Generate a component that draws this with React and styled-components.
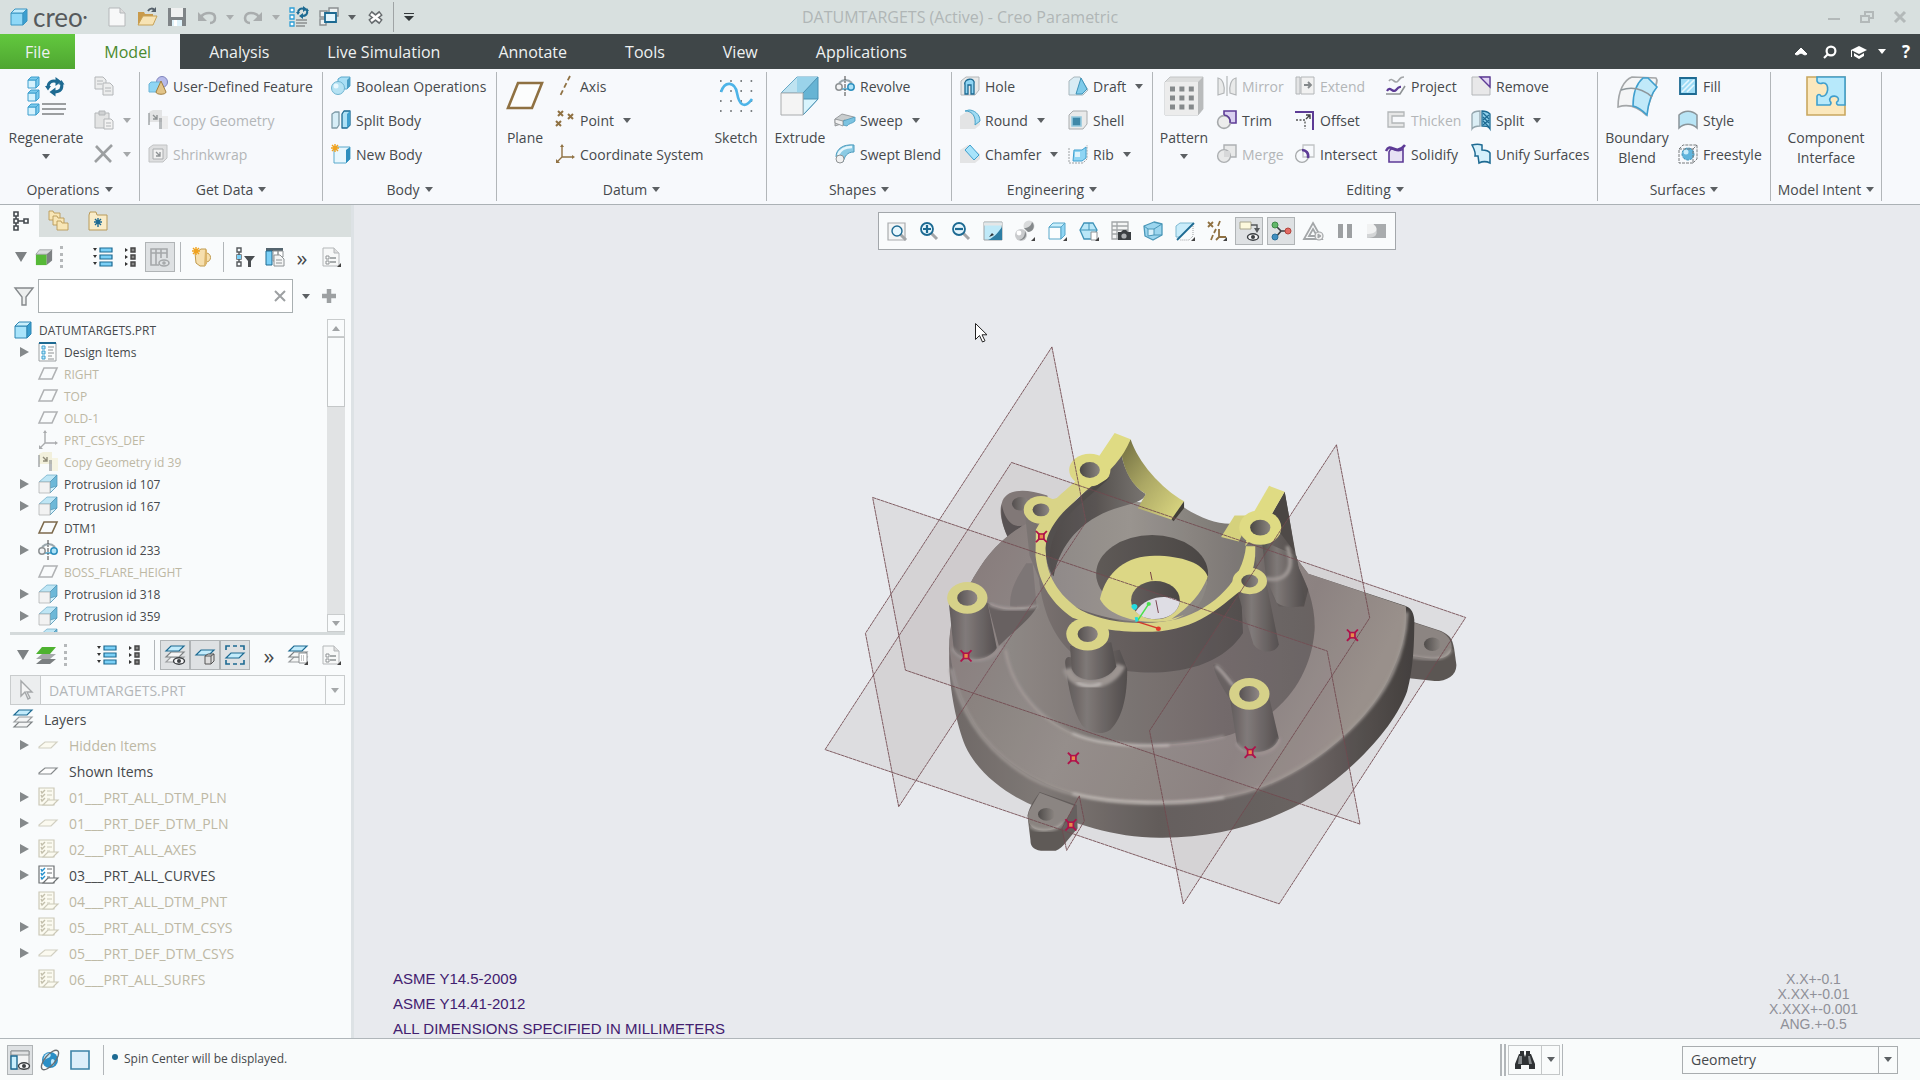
import React from "react";
import styled, { createGlobalStyle, css } from "styled-components";

const ink = "#46494c";
const faded = "#b3b6b8";
const teal = "#1d6a92";
const blue = "#3f9fce";
const steel = "#8e9294";
const purple = "#5d3b96";
const tan = "#8f7142";

/* ---------- icons, 20x20 unless a box is given ---------- */

const cube = (front, top, side, line) => (
  <g stroke={line} strokeLinejoin="round">
    <path fill={front} d="M2 6h12v12H2z" />
    <path fill={top} d="M2 6l4-4h12l-4 4z" />
    <path fill={side} d="M14 6l4-4v12l-4 4z" />
  </g>
);

const sheet = (y, fill, line) => (
  <path d={`M1 ${y + 5}l5-5h13l-5 5z`} fill={fill} stroke={line} strokeWidth="1.2" />
);

const swirl = (color) => (
  <g fill="none" stroke={color} strokeWidth="2">
    <path d="M2 7c0-4 3-5 6-4" />
    <path d="M11 4c1 4-1 6-5 6" />
    <path d="M7 0l4 3-4 3zM7 7v6l-4-3z" fill={color} stroke="none" />
    <path d="M0 6h4L2 9zM9 5h4l-2-3z" fill={color} stroke="none" />
  </g>
);

const pin = <path d="M20 16v4h-4z" fill="#444" />;
const magnifier = (
  <g>
    <path d="M12 12l6 6" stroke="#a3a6a8" strokeWidth="3" />
    <circle cx="8" cy="8" r="6" fill="#e6f6fd" stroke={teal} strokeWidth="1.8" />
  </g>
);
const checklist = (line, tick, page) => (
  <g fill={page} stroke={line} strokeWidth="1.2">
    <path d="M1 1h15v17H1z" />
    <path d="M9 4h5M9 8h5M9 12h3" />
    <path d="M3 4l1 2 3-3M3 8l1 2 3-3M3 12l1 2 3-3" fill="none" stroke={tick} strokeWidth="1.4" />
    <path d="M5 18l5-5h10l-5 5z" />
  </g>
);
const listRows = (
  <g>
    {[1, 8, 15].map((y) => (
      <g key={y}>
        <path d={`M0 ${y}h4l-2 3z`} fill="#333" />
        <path d={`M7 ${y}h12v4H7z`} fill="#7bd0f7" stroke={teal} strokeWidth="1.2" />
      </g>
    ))}
  </g>
);
const listShort = (
  <g>
    {[1, 8, 15].map((y) => (
      <g key={y}>
        <path d={`M4 ${y}v4l3-2z`} fill="#333" />
        <path d={`M10 ${y}h4v4h-4z`} fill="#888" stroke="#444" strokeWidth="1.4" />
      </g>
    ))}
  </g>
);
const eye = (
  <g>
    <ellipse cx="14" cy="16" rx="5.5" ry="3.2" fill="#f4f5f6" stroke="#3b3f42" strokeWidth="1.4" />
    <circle cx="14" cy="16" r="2" fill="#3b3f42" />
  </g>
);
const extrude = (
  <g strokeLinejoin="round" strokeWidth=".7">
    <path d="M1 8L9 1h10L12 8z" fill="#bfe6f5" stroke="#6aa9c6" />
    <path d="M12 8l7-7v11l-7 7z" fill="#6db8d8" stroke="#4c93b4" />
    <path d="M12 19v-5l7-2z" fill="#d8f2fb" stroke="#4c93b4" />
    <path d="M1 8h11v11H1z" fill="#f2f2f2" stroke="#a9acae" />
  </g>
);
const revolve = (
  <g fill="none" strokeWidth="1.5">
    <path d="M4 7c4-4 9-4 13 0" stroke="#9aa7ad" strokeWidth="2" />
    <path d="M5 13h10" stroke="#72b9d8" strokeWidth="2" />
    <circle cx="4" cy="11" r="3.2" fill="#f3f4f5" stroke="#8e9294" />
    <circle cx="16" cy="11" r="3.2" fill="#aee3f8" stroke="#2d8fbe" />
    <path d="M10 0v20" stroke="#444" strokeWidth="1" strokeDasharray="4 1 2 1" />
  </g>
);
const csys = (color) => (
  <g stroke={color} fill={color} strokeWidth="1.4">
    <path d="M7 2v11h11M7 13l-5 5" fill="none" />
    <path d="M5 3l2-3 2 3zM17 11l3 2-3 2zM1 15v4h4z" stroke="none" />
  </g>
);
const copyGeom = (a, b, arrow) => (
  <g>
    <path d="M1 2l4-2h9v12H1z" fill={a} />
    <path d="M0 3h2v12H0zM11 8h3v11h-3z" fill={steel} opacity=".6" />
    <path d="M14 6h6v13h-6z" fill={b} />
    <path d="M5 5l4 4M9 5v4H5" fill="none" stroke={arrow} strokeWidth="1.4" />
  </g>
);
const page = (
  <g>
    <path d="M2 1h11l5 5v13H2z" fill="#f7f8f8" stroke="#b4b7b9" />
    <path d="M13 1v5h5" fill="#ddd" stroke="#b4b7b9" />
  </g>
);
const propsPage = (
  <g>
    {page}
    <path d="M9 11h6M9 15h6" stroke={steel} strokeWidth="1.3" />
    <path d="M5 9h3v3H5zM5 14h3v3H5z" fill="#fff" stroke={steel} />
    {pin}
  </g>
);
const slab = (color, fill = "none") => (
  <path d="M1 15L6 4h13l-5 11z" fill={fill} stroke={color} strokeWidth="1.6" />
);
const flat = (color, fill) => (
  <path d="M1 12l6-5h12l-6 6H1z" fill={fill} stroke={color} strokeWidth="1.2" />
);
const folder = (x, y) => (
  <path key={x} d={`M${x} ${y}h4l1 2h6v7H${x}z`} fill="#f8e6b6" stroke="#b99a58" strokeWidth=".9" />
);

const icons = {
  logo: cube("#8fd8f7", "#c2ebfb", "#3a9fd0", "#3a95c2"),
  partBlue: cube("#a9e4fb", "#c9effc", "#3a9fd0", "#2f86b3"),
  newFile: page,
  open: (
    <g>
      <path d="M1 5h6l1 2h8v11H1z" fill="#c99a4a" />
      <path d="M1 18L6 9h14l-4 9z" fill="#f7e3b4" stroke="#c7a257" />
      <path d="M11 4c2-3 5-3 6-1" fill="none" stroke="#55606a" strokeWidth="2" />
      <path d="M19 0v5h-5z" fill="#55606a" />
    </g>
  ),
  save: (
    <g>
      <path d="M1 1h18v18H1z" fill="#7f8487" />
      <path d="M4 1h12v9H4z" fill="#f0f1f1" />
      <path d="M5 13h10v6H5z" fill="#dff3fb" />
      <path d="M7 13h3v6H7z" fill="#fff" />
    </g>
  ),
  undo: (
    <g fill="none" stroke="#a9adae" strokeWidth="2.6">
      <path d="M4 10c3-5 14-6 14 1 0 3-2 5-5 5" />
      <path d="M1 5v9h9z" fill="#a9adae" stroke="none" />
    </g>
  ),
  redo: (
    <g fill="none" stroke="#a9adae" strokeWidth="2.6">
      <path d="M16 10c-3-5-14-6-14 1 0 3 2 5 5 5" />
      <path d="M19 5v9h-9z" fill="#a9adae" stroke="none" />
    </g>
  ),
  regenSmall: (
    <g>
      {[1, 8, 15].map((y) => (
        <path key={y} d={`M1 ${y}h4v4H1z`} fill="#fff" stroke="#2f9fd6" strokeWidth="1.3" />
      ))}
      <g transform="translate(7 -1)">{swirl(teal)}</g>
      <path d="M7 13h11M7 16h11M7 19h9" stroke="#8a8e90" strokeWidth="1.4" />
    </g>
  ),
  windows: (
    <g fill="#eef2f2" stroke="#8a8f91" strokeWidth="1.4">
      <path d="M1 4h7v6H1zM10 1h9v8h-9zM1 12h6v6H1z" />
      <path d="M6 6h11v9H6z" fill="#e4f6fd" stroke={teal} strokeWidth="1.8" />
    </g>
  ),
  closeDoc: (
    <g>
      <path d="M5 6l11 9M16 6L5 15" stroke="#666b6e" strokeWidth="5.5" />
      <path d="M6 7l9 7M15 7l-9 7" stroke="#fff" strokeWidth="2.6" />
    </g>
  ),
  copy: (
    <g fill="#eceded" stroke="#b3b6b8">
      <path d="M1 1h8l3 3v9H1z" />
      <path d="M9 7h7l3 3v9H9z" />
      <path d="M3 5h6M3 8h5M11 12h6M11 15h6" />
    </g>
  ),
  paste: (
    <g fill="#e3e4e4" stroke="#b3b6b8">
      <path d="M1 3h14v15H1z" />
      <path d="M5 1h6v4H5z" fill="#cfd1d2" />
      <path d="M10 9h7l2 2v8h-9z" fill="#f2f2f2" />
      <path d="M12 13h5M12 16h5" />
    </g>
  ),
  del: <path d="M2 2l15 16M18 1L1 18" stroke="#9c9fa1" strokeWidth="2.6" />,
  udf: (
    <g>
      <circle cx="14" cy="6" r="5.5" fill="#b7bbea" stroke="#7f84bd" />
      <path d="M1 8l2-2h10v10H1z" fill="#8fd5f4" stroke="#6cb4d6" />
      <path d="M13 5l5 11c0 3-10 3-10 0z" fill="#e2c488" stroke="#a07d3e" />
    </g>
  ),
  copyGeom: copyGeom("#e3e4e5", "#ececec", steel),
  copyGeomTree: copyGeom("#f2f0dc", "#f6f4e2", "#8f8b78"),
  shrinkwrap: (
    <g>
      <path d="M1 4l4-3h14v13l-4 4H1z" fill="#dedfe0" stroke="#c1c3c4" />
      <path d="M5 5h10v10H5z" fill="#f1f1f1" stroke="#a9acae" />
      <path d="M8 8l4 4M12 8v4H8" fill="none" stroke={steel} strokeWidth="1.3" />
    </g>
  ),
  boolean: (
    <g>
      <path d="M7 3l3-2h9v9l-3 3H7z" fill="#a9dff5" stroke="#5aa9cc" />
      <path d="M16 4l3-3v9l-3 3z" fill="#4a9fc6" />
      <circle cx="7" cy="12" r="6.5" fill="#b5e2f3" stroke="#6fb4d0" />
      <circle cx="5" cy="10" r="2.5" fill="#e9f8fe" />
    </g>
  ),
  splitBody: (
    <g strokeWidth="1.3" strokeLinejoin="round">
      <path d="M1 4l3-2h4v13l-2 3H1z" fill="#d7eef7" stroke="#7d9aa6" />
      <path d="M11 4l2-3h6v14l-3 3h-5z" fill="#aee1f6" stroke={teal} />
      <path d="M16 4l3-3v14l-3 3z" fill={blue} />
    </g>
  ),
  newBody: (
    <g>
      <path d="M3 6l3-3h13v12l-4 4H3z" fill="#e8f7fd" stroke="#5aa9cc" />
      <path d="M15 6l4-3v12l-4 4z" fill="#2d8fbe" />
      <path d="M4 0v8M0 4h8M1 1l6 6M7 1L1 7" stroke="#f0a21e" strokeWidth="1.4" />
    </g>
  ),
  axis: <path d="M15 0L5 20" stroke={tan} strokeWidth="1.8" strokeDasharray="5 3" />,
  point: (
    <path d="M3 1l5 5M8 1L3 6M13 4l5 5M18 4l-5 5M1 11l5 5M6 11l-5 5" stroke={tan} strokeWidth="2" />
  ),
  csys: csys(tan),
  csysGray: csys("#a9abad"),
  revolve,
  extrude,
  sweep: (
    <g strokeLinejoin="round" strokeWidth=".8">
      <path d="M0 9l7-5 12 3-4 4-6-1v3l-9 3z" fill="#c9cdce" stroke="#888c8e" />
      <path d="M8 11l12-4v4c-3 3-6 2-8 5l-4-1z" fill="#7cc3e1" stroke="#4c9bbd" />
      <path d="M0 9l8 2v5l-8-3z" fill="#f1f1f1" stroke="#888c8e" />
    </g>
  ),
  sweptBlend: (
    <g>
      <path d="M1 13C1 5 8 0 19 1v7c-7 0-9 4-11 10z" fill="#8ccbe4" stroke="#4c9bbd" />
      <path d="M3 11C5 6 10 3 17 3" fill="none" stroke="#e5f6fc" strokeWidth="2.4" />
      <circle cx="5" cy="15" r="4" fill="#f1f1f1" stroke="#8e9294" />
    </g>
  ),
  hole: (
    <g>
      <path d="M1 5l5-4h13v13l-4 5H1z" fill="#e7e8e8" stroke="#b4b7b9" />
      <path d="M5 9c-2-7 11-8 9-1v10h-3V9H8v9H5z" fill="#8fd5f4" stroke={teal} strokeWidth="1.3" />
    </g>
  ),
  round: (
    <g>
      <path d="M0 6l8-5 12 5v9l-5 4H0z" fill="#e3e4e5" />
      <path d="M5 1c8 0 11 6 10 14l5-4C20 4 14 0 9 0z" fill="#a0dbf3" stroke="#4aa2c8" />
    </g>
  ),
  chamfer: (
    <g>
      <path d="M0 6l8-5 12 9v5l-5 4H0z" fill="#e3e4e5" />
      <path d="M5 6l5-5 9 10-5 5z" fill="#a8e4fb" stroke="#3f9fce" />
    </g>
  ),
  draft: (
    <g>
      <path d="M1 5l5-4h6l8 13-5 5H1z" fill="#d9ecf4" stroke="#a9b7bd" />
      <path d="M8 18l5-16 6 11-5 5z" fill="#7fcbea" stroke="#3f93b8" />
    </g>
  ),
  shell: (
    <g>
      <path d="M1 5l4-4h14v13l-4 5H1z" fill="#e9eaea" stroke="#a9acae" />
      <path d="M4 7h9v9H4z" fill="#3f88a8" stroke="#94c9de" strokeWidth="1.6" />
    </g>
  ),
  rib: (
    <g>
      <path d="M1 4v15h14l4-4V1" fill="none" stroke="#9da1a3" strokeDasharray="2 1" />
      <path d="M6 6l-1 11h9l4-3V3l-4 3z" fill="#8fd5f4" stroke="#3f9fce" />
      <path d="M7 8h5v5H7z" fill="#dff3fb" />
    </g>
  ),
  mirror: (
    <g fill="#e9eaea" stroke="#b3b6b8" strokeWidth="1.2">
      <path d="M1 2c5 1 7 8 6 15l-6 2zM19 2c-5 1-7 8-6 15l6 2z" />
      <path d="M10 0v20" />
    </g>
  ),
  trim: (
    <g strokeWidth="1.6">
      <path d="M7 1h12v12H7z" fill="#d9cff0" stroke={purple} />
      <circle cx="7" cy="12" r="6.4" fill="#ececec" stroke="#a6a9ab" />
      <path d="M7 5c4 0 7 4 6 8" fill="none" stroke={purple} />
    </g>
  ),
  merge: (
    <g fill="#e8e9e9" stroke="#adb0b2" strokeWidth="1.4">
      <path d="M7 1h12v12H7z" />
      <circle cx="7" cy="12" r="6.4" />
      <path d="M7 7h6v6H7z" fill="#d7d8d9" stroke="none" />
    </g>
  ),
  extend: (
    <g stroke="#b3b6b8" fill="#e3e4e5">
      <path d="M1 1h4v17H1z" />
      <path d="M6 1h13v17H6z" fill="#f1f1f1" />
      <path d="M9 9h7M13 6l3 3-3 3" fill="none" stroke="#85898b" strokeWidth="1.8" />
    </g>
  ),
  offset: (
    <g fill="none">
      <path d="M0 2h18v18" stroke={purple} strokeWidth="2" />
      <path d="M1 10h9v9" stroke="#555" strokeDasharray="2 1.5" strokeWidth="1.3" />
      <path d="M11 9l4-4M11 5h4v4" stroke="#444" strokeWidth="1.4" />
    </g>
  ),
  intersect: (
    <g fill="none" strokeWidth="1.3">
      <path d="M8 1h11v12H8z" stroke="#c1c3c5" />
      <circle cx="7" cy="12" r="6.4" stroke="#a6a9ab" />
      <path d="M7 6c4 0 7 3 6 8" stroke={purple} strokeWidth="2.6" />
    </g>
  ),
  project: (
    <g fill="none" strokeWidth="1.6">
      <path d="M3 5c3-5 6 4 9 0s4-4 6-4" stroke="#a3a6a8" />
      <path d="M1 15c3-6 6 3 9-1s4-3 5-3" stroke={purple} strokeWidth="2.2" />
      <path d="M0 18h14l5-8" stroke="#8e9294" />
    </g>
  ),
  thicken: (
    <path d="M18 2H2v15h16v-4H6V6h12z" fill="#e6e7e7" stroke="#b3b6b8" strokeWidth="1.3" />
  ),
  solidify: (
    <g>
      <path d="M3 8c3-8 7 3 14-3v13H3z" fill="#e7e1f4" stroke={purple} strokeWidth="1.6" />
      <path d="M0 7c5-10 9 6 19-6" fill="none" stroke={purple} strokeWidth="2.6" />
    </g>
  ),
  remove: (
    <g>
      <path d="M1 1h18v18H1z" fill="#e8e8e9" stroke="#b4b7b9" />
      <path d="M9 1h10v10z" fill="#e0d3f3" stroke={purple} strokeWidth="1.4" />
    </g>
  ),
  split: (
    <g strokeWidth="1.3">
      <path d="M1 4c2-3 5-3 8-3v15c-3 0-6 0-8 3z" fill="#dbeef5" stroke="#93a5ad" />
      <path d="M11 1c4 0 6 1 8 3v15c-2-3-4-3-8-3z" fill="#8fd0ec" stroke={teal} />
      <path d="M12 3l6 6M12 7l6 6M12 11l6 6M18 5l-6 5M18 10l-6 5" stroke={teal} />
    </g>
  ),
  unify: (
    <path
      d="M1 1c4-1 7-1 10 0v5c3 0 6 0 8 3v10c-4-2-7-2-11 0l-1-7H4c1-4-1-7-3-11z"
      fill="#d5f0fb"
      stroke={teal}
      strokeWidth="1.5"
    />
  ),
  fill: (
    <g>
      <path d="M2 2h16v16H2z" fill="#9edcf6" stroke={teal} strokeWidth="1.8" />
      <path d="M4 11l7-7M4 16L16 4M9 16l7-7" stroke="#e6f7fe" strokeWidth="1.6" />
    </g>
  ),
  style: (
    <path d="M1 18V5c5-5 13-5 18 0v13c-5-5-13-5-18 0z" fill="#b9e5f6" stroke="#8a9499" strokeWidth="1.5" />
  ),
  freestyle: (
    <g fill="none" stroke="#777b7d" strokeDasharray="3 1">
      <circle cx="10" cy="10" r="6" fill="#5fb4dc" stroke="#3f93b8" />
      <circle cx="8" cy="8" r="2.5" fill="#c9ecfa" stroke="none" />
      <path d="M1 5h14v14H1zM1 5l4-4h14v14l-4 4M15 5l4-4" />
    </g>
  ),
  treeTab: (
    <g fill="none" stroke="#444a4e" strokeWidth="1.6">
      <path d="M4 1h4v4H4zM4 8h4v4H4zM4 15h4v4H4zM14 8h4v4h-4zM6 5v3M6 12v3M8 10h6" />
    </g>
  ),
  folders: <g>{[[0, 0], [4, 5], [8, 10]].map(([x, y]) => folder(x, y))}</g>,
  favorites: (
    <g>
      <path d="M1 4l1-3h6l1 3h10v15H1z" fill="#f9ecc8" stroke="#b99a58" />
      <path d="M10 7v9M6 11h8M7 8l6 6M13 8l-6 6" stroke={teal} strokeWidth="1.4" />
    </g>
  ),
  greenCube: (
    <g>
      <path d="M1 7h12v12H1z" fill="#56b937" />
      <path d="M1 7l4-5h14l-5 5z" fill="#d9dcdd" stroke="#8e9294" strokeWidth=".8" />
      <path d="M13 7l6-5v12l-6 5z" fill="#7d8183" />
    </g>
  ),
  greenLayers: (
    <g>
      <path d="M0 19l6-5h14l-6 5z" fill="#7b7f81" />
      <path d="M0 14l6-5h14l-6 5z" fill="#a6a9ab" />
      <path d="M0 9l6-7h14l-6 7z" fill="#4eb230" />
    </g>
  ),
  listRows,
  listShort,
  columns: (
    <g fill="none" stroke="#a5a8aa" strokeWidth="1.6">
      <path d="M1 2h16v4H1zM1 6v12h8M6 2v16M11 2v9M17 6v5" />
      <ellipse cx="14" cy="16" rx="5" ry="3" />
      <circle cx="14" cy="16" r="1" />
    </g>
  ),
  newPart: (
    <g>
      <path d="M3 6l6-4h5v4c6 0 6 9 0 9l-1 4H8l-4-3z" fill="#f6dfae" stroke="#c09a4d" />
      <path d="M13 3l2 0v14l-3 2z" fill="#dbb56c" />
      <path d="M4 0v8M0 4h8M1 1l6 6M7 1L1 7" stroke="#f0a21e" strokeWidth="1.4" />
    </g>
  ),
  treeFilter: (
    <g>
      <path d="M2 1h4v4H2zM2 8h4v4H2zM2 15h4v4H2zM4 5v3M4 12v3" fill="none" stroke="#55595c" strokeWidth="1.4" />
      <path d="M2 8h4v4H2z" fill="#7bd0f7" />
      <path d="M9 9h11l-4 5v6h-3v-6z" fill="#4a4e51" />
    </g>
  ),
  treeColumns: (
    <g>
      <path d="M1 1h17v3H1z" fill="#54646e" />
      <path d="M1 4h6v14H1z" fill="#7bd0f7" stroke={teal} />
      <path d="M8 4h5v10H8zM13 4h5v6h-5z" fill="#fff" stroke={steel} />
      <path d="M9 8h6l4 4v7H9z" fill="#f4f5f5" stroke={steel} />
      <path d="M11 13h6M11 16h6" stroke={steel} />
    </g>
  ),
  propsPage,
  funnel: <path d="M1 2h18l-7 9v8H8v-8z" fill="#eceeee" stroke="#85898c" strokeWidth="1.4" />,
  plus: <path d="M10 3v14M3 10h14" stroke="#9da0a2" strokeWidth="4.5" />,
  designItems: (
    <g>
      <path d="M1 1h17v18H1z" fill="#fbfcfc" stroke="#9da1a3" />
      <path d="M1 1h17" stroke={teal} strokeWidth="2" />
      <path d="M4 4h3v3H4zM4 9h3v3H4zM4 14h3v3H4z" fill="#bce8fa" stroke="#3f9fce" />
      <path d="M10 5h6M10 8h5M10 11h6M10 14h4M10 17h6" stroke={steel} />
    </g>
  ),
  slabGray: slab("#b0b2b4"),
  slabTan: slab("#7d6a4c"),
  layerSheets: (
    <g>
      {sheet(13, "#f4f5f5", "#7d8183")}
      {sheet(8, "#f4f5f5", "#9a9d9f")}
      {sheet(1, "#c2ebfb", teal)}
    </g>
  ),
  layersEye: (
    <g>
      {sheet(12, "#f4f5f5", "#9a9d9f")}
      {sheet(7, "#f4f5f5", "#7d8183")}
      {sheet(1, "#c2ebfb", teal)}
      {eye}
    </g>
  ),
  layerCube: (
    <g>
      {sheet(5, "#c2ebfb", teal)}
      <path d="M10 11l3-2h6v7l-3 3h-6zM10 11h6v8M16 11l3-2" fill="#ddd" stroke="#555" />
    </g>
  ),
  layerDash: (
    <g>
      <path d="M1 5V1h4M15 1h4v4M19 15v4h-4M5 19H1v-4M8 1h4M8 19h4" fill="none" stroke={teal} strokeWidth="1.6" />
      {sheet(8, "#c2ebfb", teal)}
    </g>
  ),
  layerSet: (
    <g>
      {sheet(12, "#f4f5f5", "#9a9d9f")}
      {sheet(7, "#f4f5f5", "#7d8183")}
      {sheet(1, "#c2ebfb", teal)}
      <path d="M11 8h8v10h-8z" fill="#fff" stroke={steel} />
      <path d="M13 11h4M13 13h4M13 15h4" stroke={steel} strokeDasharray="1 1" />
      {pin}
    </g>
  ),
  pointer: <path d="M5 1v15l4-4 3 7 2-1-3-6h5z" fill="#f4f5f5" stroke="#a5a8aa" strokeWidth="1.4" />,
  flatHidden: flat("#d2d0c2", "#fbfaf0"),
  flatShown: flat("#85898b", "#fdfdfd"),
  checksOff: checklist("#ccc9b8", "#c3bfab", "#fbfaf0"),
  checksOn: checklist("#6d7173", "#2490cc", "#fff"),
  panelEye: (
    <g>
      <path d="M1 1h18v18H1z" fill="#f3f4f4" stroke="#8e9294" />
      <path d="M1 1h18v4H1z" fill="#dfe1e2" stroke="#8e9294" />
      <path d="M1 6h6v13H1z" fill="#c9eefc" stroke={teal} strokeWidth="1.4" />
      {eye}
    </g>
  ),
  globe: (
    <g>
      <circle cx="10" cy="10" r="8" fill="#2b8fc6" />
      <path d="M6 4c4-2 6 1 4 3s-5 1-6 4c-1-3 0-5 2-7zM12 9c3 0 4 3 1 7-2-1-3-5-1-7z" fill="#bfe6f8" />
      <ellipse cx="10" cy="10" rx="12" ry="5" transform="rotate(-50 10 10)" fill="none" stroke="#6a6e71" strokeWidth="1.3" />
    </g>
  ),
  square: <path d="M1 1h18v18H1z" fill="#dceefa" stroke="#3b83a8" strokeWidth="1.6" />,
  binoculars: (
    <g fill="#2f3234">
      <path d="M5 1h4v3H5zM11 1h4v3h-4z" />
      <path d="M4 4h5l1 3 1-3h5l4 10v5h-6v-4H6v4H0v-5z" />
      <path d="M4 6h3v8H3zM13 6h2l2 8h-3z" fill="#85898b" />
    </g>
  ),
  zoomFit: (
    <g>
      <path d="M1 2h17v17H1z" fill="#f4f5f5" stroke="#a9acae" strokeWidth="1.2" />
      <g transform="translate(3 3)">
        <path d="M10 10l6 6" stroke="#a3a6a8" strokeWidth="3" />
        <circle cx="7" cy="7" r="5" fill="#e6f6fd" stroke={teal} strokeWidth="1.4" />
      </g>
    </g>
  ),
  zoomIn: (
    <g>
      {magnifier}
      <path d="M8 4v8M4 8h8" stroke={teal} strokeWidth="2.2" />
    </g>
  ),
  zoomOut: (
    <g>
      {magnifier}
      <path d="M4 8h8" stroke={teal} strokeWidth="2.2" />
    </g>
  ),
  repaint: (
    <g>
      <path d="M1 1h18v18H1z" fill="#bfe9f8" stroke="#9da1a3" />
      <path d="M1 3h18" stroke="#e4e6e7" strokeWidth="3" />
      <path d="M19 6v13H5c5-2 9-6 14-13z" fill="#2d7ea4" />
      <path d="M6 16l3-4 2 2z" fill="#30363a" />
    </g>
  ),
  render: (
    <g>
      <circle cx="14" cy="5" r="5.5" fill="#d9dbdc" />
      <path d="M17 1c4 4 1 10-4 10l-4-4c4 0 7-2 8-6z" fill="#85898b" />
      <circle cx="6" cy="14" r="6" fill="#c9cbcd" />
      <path d="M10 10c3 5-1 10-6 9 4-1 6-4 6-9z" fill="#85898b" />
      <circle cx="4" cy="12" r="2.4" fill="#fff" />
      {pin}
    </g>
  ),
  displayStyle: (
    <g>
      {cube("#fbfdfe", "#c9effc", "#8fd5f4", "#57a7ca")}
      {pin}
    </g>
  ),
  orient: (
    <g>
      <path d="M5 2h9l4 7-4 9H5L1 9z" fill="#b9e7f8" stroke="#3f93b8" strokeWidth="1.3" />
      <path d="M1 9h17M10 9V2" stroke="#3f93b8" />
      <path d="M12 11h6v8h-6z" fill="#fff" stroke={steel} />
      {pin}
    </g>
  ),
  snapshot: (
    <g>
      <path d="M1 1h16v17H1zM1 5h16M1 9h16M1 13h8M6 1v17" fill="#f4f5f5" stroke="#a3a6a8" strokeWidth="1.3" />
      <path d="M7 11h3l2-2h3l2 2h3v8H7z" fill="#3b3f42" />
      <circle cx="13" cy="15" r="2.6" fill="#aeb1b3" />
    </g>
  ),
  perspective: (
    <g strokeLinejoin="round">
      <path d="M1 5l10-4 8 2v11l-9 5-8-4z" fill="#9bd5ee" stroke="#4a97b8" strokeWidth="1.3" />
      <path d="M5 8h6v6l-6 1zM11 8l8-5M11 14l8 0M1 5l4 3" fill="#d7f0fa" stroke="#4a97b8" />
    </g>
  ),
  section: (
    <g>
      <path d="M1 5l4-3h13L5 16H1z" fill="#c9ecfa" stroke="#7fb9d1" />
      <path d="M18 3v12l-4 4H5" fill="none" stroke="#9da1a3" strokeDasharray="1 1" />
      <path d="M2 19L19 2" stroke={teal} strokeWidth="1.8" />
      {pin}
    </g>
  ),
  datumDisplay: (
    <g>
      <path d="M1 1l5 5M6 1L1 6M13 0l-2 5M9 8l-2 4M6 14l-2 5M12 8v8h7M12 16l-3 3" fill="none" stroke={tan} strokeWidth="1.8" />
      {pin}
    </g>
  ),
  annotation: (
    <g>
      <path d="M1 1h11v7H1z" fill="#fdf9dd" stroke="#a9a68f" />
      <path d="M12 4h6v4" fill="none" stroke="#55595c" strokeWidth="1.4" />
      <path d="M15 7h6l-3 5z" fill="#55595c" />
      {eye}
    </g>
  ),
  spin: (
    <g>
      <path d="M5 5l5 5-5 6M10 10h7" fill="none" stroke="#3b3f42" strokeWidth="1.6" />
      <circle cx="4" cy="4" r="3" fill="#62b86a" stroke="#3f8a48" />
      <circle cx="4" cy="16" r="3" fill="#3f8fc0" stroke="#2a6f99" />
      <circle cx="17" cy="10" r="3" fill="#e26a62" stroke="#b3443d" />
    </g>
  ),
  simulate: (
    <g fill="none" stroke="#a3a6a8" strokeWidth="1.8">
      <path d="M10 2l9 16H1z" />
      <path d="M10 8l4 7H6z" />
      <circle cx="16" cy="15" r="4" fill="#f1f1f1" strokeWidth="1.2" />
      <path d="M15 13l3 2-3 2z" fill="#a3a6a8" strokeWidth="1" />
    </g>
  ),
  pause: <path d="M3 3h5v14H3zM12 3h5v14h-5z" fill="#9da0a2" />,
  resume: (
    <g>
      <path d="M0 3h19v14H0z" fill="#d3d5d6" />
      <path d="M0 17c9 0 11-4 9-9H7V3h12v14z" fill="#a9acae" />
      <path d="M0 3h6c7 5 3 10-6 10z" fill="#f1f2f2" />
    </g>
  ),
  collapse: <path d="M4 12l6-6 6 6-2 1-4-2-4 2z" fill="#fff" stroke="#fff" />,
  search: (
    <g stroke="#fff" strokeWidth="2.2" fill="none">
      <circle cx="11" cy="9" r="4.4" />
      <path d="M8 12l-4 4" />
    </g>
  ),
  learn: (
    <g fill="#fff">
      <path d="M10 4l8 4-8 4-8-4z" />
      <path d="M5 11l5 3 5-3v3l-5 3-5-3zM2 8h1v7H2z" />
    </g>
  ),
  // large ribbon glyphs
  regenerate: [
    "0 0 40 40",
    <g key="g">
      {[2, 15, 29].map((y) => (
        <g key={y} stroke="#3f9fce" strokeLinejoin="round">
          <path d={`M2 ${y + 2}h8v8H2z`} fill="#d5f2fd" />
          <path d={`M2 ${y + 2}l3-3h8l-3 3zM10 ${y + 2}l3-3v8l-3 3z`} fill="#7bcbed" />
        </g>
      ))}
      <g transform="translate(19 1) scale(1.5)">{swirl(teal)}</g>
      <path d="M16 28h24M16 33h24M16 38h22" stroke="#9b9ea0" strokeWidth="2.2" />
    </g>,
  ],
  plane: ["0 0 40 40", <path key="p" d="M3 32L13 7h24L27 32z" fill="#fcfdfd" stroke={tan} strokeWidth="2.6" />],
  sketch: [
    "0 0 40 40",
    <g key="s" fill="none">
      {[5, 15, 25, 35].map((y) => (
        <path key={y} d={`M4 ${y}h34`} stroke="#55595c" strokeWidth="1.6" strokeDasharray="1.6 8.6" />
      ))}
      <path d="M5 16C9 4 19 6 21 17s7 17 15 6" stroke="#4db4e8" strokeWidth="2.6" />
    </g>,
  ],
  extrudeBig: [
    "0 0 40 40",
    <g key="e" strokeLinejoin="round">
      <path d="M1 17L17 1h21L23 17z" fill="#bfe3f1" stroke="#6aa9c6" />
      <path d="M17 1v16h6L38 1z" fill="#9ad3ea" />
      <path d="M23 17L38 1v22L23 39z" fill="#67b4d4" stroke="#4c93b4" />
      <path d="M23 39V23h15z" fill="#d8f4fd" stroke="#4c93b4" />
      <path d="M1 17h22v22H1z" fill="#f4f4f4" stroke="#a9acae" />
    </g>,
  ],
  pattern: [
    "0 0 40 40",
    <g key="p">
      <path d="M1 6l5-5h33v32l-5 6H1z" fill="#dcdddd" stroke="#c3c5c6" />
      <path d="M34 6l5-5v32l-5 6z" fill="#b9bbbc" />
      <path d="M1 6h33v33H1z" fill="#ececec" />
      {[11, 20, 29].map((y) => (
        <path key={y} d={`M6 ${y + 2}h24`} stroke="#85898b" strokeWidth="5" strokeDasharray="5 4.4" />
      ))}
    </g>,
  ],
  boundary: [
    "0 0 40 40",
    <g key="b" strokeWidth="1.6">
      <path d="M1 31C1 15 7 4 15 1l24 1c4 4-5 14-10 37C20 30 10 28 1 31z" fill="#f4f5f6" stroke="#a3a6a8" />
      <path d="M26 2h5l9 9c-7 8-9 18-10 28-5-5-9-8-14-9 0-13 3-22 10-28z" fill="#c0e9f9" stroke={blue} />
      <path d="M4 14c12-4 22-1 31 7" fill="none" stroke="#8d979c" />
    </g>,
  ],
  component: [
    "0 0 40 40",
    <g key="c" strokeWidth="1.6">
      <path d="M1 1h38v38H1z" fill="#fbe8bd" stroke="#c9a75f" />
      <path
        d="M11 1h28v28h-7c-2-1-2-3 0-4 3-6-10-7-8 0 2 2 1 3 0 4H11v-9c1-2 3-2 4 0 8 2 9-14 2-13-3 1-5 1-6-2z"
        fill="#b7e9fb"
        stroke={blue}
      />
    </g>,
  ],
};

function Icon({ name, size = 20 }) {
  const entry = icons[name];
  const [box, art] = Array.isArray(entry) ? entry : ["0 0 20 20", entry];
  return (
    <Glyph $size={size} viewBox={box} aria-hidden="true">
      {art}
    </Glyph>
  );
}

function Caret({ color = "#5c6063" }) {
  return (
    <CaretSvg viewBox="0 0 8 5" aria-hidden="true">
      <path d="M0 0h8L4 5z" fill={color} />
    </CaretSvg>
  );
}

/* ---------- data ---------- */

const item = (icon, label, extra = {}) => ({ icon, label, ...extra });
const off = { off: true };
const menu = { menu: true };

const groups = [
  {
    label: "Operations",
    width: 140,
    parts: [
      { big: "regenerate", label: ["Regenerate"], width: 76, menu: true },
      {
        width: 40,
        rows: [
          item("copy", "", off),
          item("paste", "", { off: true, menu: true }),
          item("del", "", { off: true, menu: true }),
        ],
      },
    ],
  },
  {
    label: "Get Data",
    width: 183,
    parts: [
      {
        rows: [
          item("udf", "User-Defined Feature"),
          item("copyGeom", "Copy Geometry", off),
          item("shrinkwrap", "Shrinkwrap", off),
        ],
      },
    ],
  },
  {
    label: "Body",
    width: 174,
    parts: [{ rows: [item("boolean", "Boolean Operations"), item("splitBody", "Split Body"), item("newBody", "New Body")] }],
  },
  {
    label: "Datum",
    width: 270,
    parts: [
      { big: "plane", label: ["Plane"], width: 40 },
      { width: 149, rows: [item("axis", "Axis"), item("point", "Point", menu), item("csys", "Coordinate System")] },
      { big: "sketch", label: ["Sketch"], width: 44 },
    ],
  },
  {
    label: "Shapes",
    width: 185,
    parts: [
      { big: "extrudeBig", label: ["Extrude"], width: 50 },
      { rows: [item("revolve", "Revolve"), item("sweep", "Sweep", menu), item("sweptBlend", "Swept Blend")] },
    ],
  },
  {
    label: "Engineering",
    width: 201,
    parts: [
      { width: 98, rows: [item("hole", "Hole"), item("round", "Round", menu), item("chamfer", "Chamfer", menu)] },
      { rows: [item("draft", "Draft", menu), item("shell", "Shell"), item("rib", "Rib", menu)] },
    ],
  },
  {
    label: "Editing",
    width: 445,
    parts: [
      { big: "pattern", label: ["Pattern"], width: 46, menu: true },
      { width: 68, rows: [item("mirror", "Mirror", off), item("trim", "Trim"), item("merge", "Merge", off)] },
      { width: 81, rows: [item("extend", "Extend", off), item("offset", "Offset"), item("intersect", "Intersect")] },
      { width: 75, rows: [item("project", "Project"), item("thicken", "Thicken", off), item("solidify", "Solidify")] },
      { rows: [item("remove", "Remove"), item("split", "Split", menu), item("unify", "Unify Surfaces")] },
    ],
  },
  {
    label: "Surfaces",
    width: 173,
    parts: [
      { big: "boundary", label: ["Boundary", "Blend"], width: 62 },
      { rows: [item("fill", "Fill"), item("style", "Style"), item("freestyle", "Freestyle")] },
    ],
  },
  {
    label: "Model Intent",
    width: 111,
    parts: [{ big: "component", label: ["Component", "Interface"], width: 94 }],
  },
];

const tabs = ["File", "Model", "Analysis", "Live Simulation", "Annotate", "Tools", "View", "Applications"];

const features = [
  { icon: "designItems", label: "Design Items", open: true },
  { icon: "slabGray", label: "RIGHT", dim: true },
  { icon: "slabGray", label: "TOP", dim: true },
  { icon: "slabGray", label: "OLD-1", dim: true },
  { icon: "csysGray", label: "PRT_CSYS_DEF", dim: true },
  { icon: "copyGeomTree", label: "Copy Geometry id 39", dim: true },
  { icon: "extrude", label: "Protrusion id 107", open: true },
  { icon: "extrude", label: "Protrusion id 167", open: true },
  { icon: "slabTan", label: "DTM1" },
  { icon: "revolve", label: "Protrusion id 233", open: true },
  { icon: "slabGray", label: "BOSS_FLARE_HEIGHT", dim: true },
  { icon: "extrude", label: "Protrusion id 318", open: true },
  { icon: "extrude", label: "Protrusion id 359", open: true },
  { icon: "extrude", label: "" },
];

const layers = [
  { icon: "flatHidden", label: "Hidden Items", dim: true, open: true },
  { icon: "flatShown", label: "Shown Items" },
  { icon: "checksOff", label: "01___PRT_ALL_DTM_PLN", dim: true, open: true },
  { icon: "flatHidden", label: "01___PRT_DEF_DTM_PLN", dim: true, open: true },
  { icon: "checksOff", label: "02___PRT_ALL_AXES", dim: true, open: true },
  { icon: "checksOn", label: "03___PRT_ALL_CURVES", open: true },
  { icon: "checksOff", label: "04___PRT_ALL_DTM_PNT", dim: true },
  { icon: "checksOff", label: "05___PRT_ALL_DTM_CSYS", dim: true, open: true },
  { icon: "flatHidden", label: "05___PRT_DEF_DTM_CSYS", dim: true, open: true },
  { icon: "checksOff", label: "06___PRT_ALL_SURFS", dim: true },
];

const viewTools = [
  "zoomFit", "zoomIn", "zoomOut", "repaint", "render", "displayStyle", "orient", "snapshot",
  "perspective", "section", "datumDisplay", "annotation", "spin", "simulate", "pause", "resume",
];

const targets = [[526, 549], [347, 866], [1265, 811], [1022, 1122], [602, 1138], [596, 1315]];

const planes = [
  "551,45 632,510 187,1267 108,806",
  "455,352 1534,764 1091,1525 12,1115",
  "125,445 1205,853 1283,1313 203,904",
  "1227,305 1306,765 863,1525 783,1065",
  "616,1238 628,1305 586,1383 575,1325",
];

/* ---------- parts ---------- */

function TreeRow({ row, layer }) {
  return (
    <Row $layer={layer}>
      <Twisty type="button" aria-label={`Expand ${row.label}`} disabled={!row.open}>
        {row.open && (
          <svg viewBox="0 0 10 12" width="10" height="12">
            <path d="M0 1l9 5-9 5z" fill="#85898b" />
          </svg>
        )}
      </Twisty>
      <Icon name={row.icon} />
      <RowText $dim={row.dim} $layer={layer}>{row.label}</RowText>
    </Row>
  );
}

function Ribbon() {
  return (
    <RibbonBar>
      {groups.map((group) => (
        <Group key={group.label} $width={group.width}>
          <Parts $center={group.parts.length === 1 && group.parts[0].big}>
            {group.parts.map((part, i) =>
              part.big ? (
                <BigButton key={i} type="button" $width={part.width}>
                  <Icon name={part.big} size={40} />
                  <BigLabel>
                    {part.label.map((line) => (
                      <span key={line}>{line}</span>
                    ))}
                  </BigLabel>
                  {part.menu && <Caret />}
                </BigButton>
              ) : (
                <Column key={i} $width={part.width}>
                  {part.rows.map((row, n) => (
                    <Command key={n} type="button" disabled={row.off} aria-label={row.label || row.icon}>
                      <Icon name={row.icon} />
                      {row.label && <span>{row.label}</span>}
                      {row.menu && <Caret color={row.off ? "#a5a8aa" : "#5c6063"} />}
                    </Command>
                  ))}
                </Column>
              )
            )}
          </Parts>
          <GroupLabel type="button">
            {group.label}
            <Caret />
          </GroupLabel>
        </Group>
      ))}
    </RibbonBar>
  );
}

function Boss({ x, y, rx = 48, ry = 42, hx = 24, hy = 21 }) {
  return (
    <g>
      <ellipse cx={x} cy={y} rx={rx} ry={ry} fill="#dfdb83" />
      <ellipse cx={x} cy={y} rx={hx} ry={hy} fill="url(#bore)" />
    </g>
  );
}

function Model() {
  return (
    <Scene viewBox="354 205 1566 833" role="img" aria-label="Housing part with datum planes">
      <defs>
        <linearGradient id="bore">
          <stop offset="0" stopColor="#4b4845" />
          <stop offset="1" stopColor="#8a8580" />
        </linearGradient>
        <linearGradient id="post">
          <stop offset="0" stopColor="#55514e" />
          <stop offset=".35" stopColor="#7b7672" />
          <stop offset="1" stopColor="#484542" />
        </linearGradient>
        <linearGradient id="rim">
          <stop offset="0" stopColor="#6b6663" />
          <stop offset=".2" stopColor="#7d7773" />
          <stop offset=".45" stopColor="#5e5956" />
          <stop offset=".75" stopColor="#66605d" />
          <stop offset="1" stopColor="#3e3b38" />
        </linearGradient>
        <linearGradient id="deck" x1="0" y1="0" x2="1" y2=".3">
          <stop offset="0" stopColor="#7d7572" />
          <stop offset=".45" stopColor="#948e89" />
          <stop offset=".8" stopColor="#8a807d" />
          <stop offset="1" stopColor="#989089" />
        </linearGradient>
        <linearGradient id="dome">
          <stop offset="0" stopColor="#8c8782" />
          <stop offset=".35" stopColor="#77726e" />
          <stop offset=".7" stopColor="#6a6461" />
          <stop offset="1" stopColor="#625c59" />
        </linearGradient>
        <linearGradient id="barrel">
          <stop offset="0" stopColor="#77716d" />
          <stop offset=".4" stopColor="#5f5a57" />
          <stop offset="1" stopColor="#4a4643" />
        </linearGradient>
        <linearGradient id="wall">
          <stop offset="0" stopColor="#45423f" />
          <stop offset=".5" stopColor="#55514e" />
          <stop offset="1" stopColor="#797571" />
        </linearGradient>
        <linearGradient id="saddle" x1="0" y1="0" x2="1" y2="1">
          <stop offset="0" stopColor="#6f6c40" />
          <stop offset=".45" stopColor="#aba764" />
          <stop offset="1" stopColor="#e0dc84" />
        </linearGradient>
        <linearGradient id="well">
          <stop offset="0" stopColor="#5b5753" />
          <stop offset="1" stopColor="#45423f" />
        </linearGradient>
        <linearGradient id="floor">
          <stop offset="0" stopColor="#8d8984" />
          <stop offset=".4" stopColor="#98948e" />
          <stop offset="1" stopColor="#76726e" />
        </linearGradient>
        <filter id="soft" x="-20%" y="-20%" width="140%" height="140%">
          <feGaussianBlur stdDeviation="4" />
        </filter>
      </defs>

      <g transform="translate(820 330) scale(.4209 .3763)">
        <g fill="#c4bdb9" fillOpacity=".2">
          {planes.map((p) => (
            <polygon key={p} points={p} />
          ))}
        </g>

        {/* mounting ears */}
        <path d="M445 545C425 500 428 470 432 460C440 425 480 418 540 440L560 540L480 560z" fill="#7d7471" />
        <path d="M432 465C440 510 460 525 480 520L450 560C432 520 428 490 432 465z" fill="#504b49" />
        <ellipse cx="477" cy="462" rx="21" ry="18" fill="url(#bore)" />
        <path d="M1410 776L1470 798C1500 810 1503 825 1507 850L1512 890C1512 918 1490 933 1460 933L1395 925z" fill="#5b5653" />
        <path d="M1412 778L1470 799C1498 810 1506 840 1498 855C1485 878 1465 876 1405 866z" fill="#8b8480" />
        <path d="M1405 868C1465 880 1488 874 1500 850" fill="none" stroke="#b5afaa" strokeWidth="5" filter="url(#soft)" />
        <ellipse cx="1455" cy="835" rx="20" ry="18" fill="url(#bore)" />

        {/* flange */}
        <path
          d="M490 515C420 560 390 610 360 668C320 730 305 790 307 860C305 950 325 1050 345 1105C375 1180 450 1240 520 1270C600 1310 700 1350 810 1349C950 1350 1080 1305 1170 1240C1290 1150 1370 1040 1395 960C1410 900 1412 830 1412 770C1410 745 1400 737 1390 733L1160 648L1100 560z"
          fill="url(#rim)"
        />
        <path
          d="M490 515C420 560 390 610 360 668C320 730 308 780 308 830C309 900 330 975 358 1030C400 1120 500 1205 620 1237C740 1265 900 1262 1010 1230C1150 1185 1290 1060 1350 930C1385 850 1395 800 1392 735L1160 648L1100 560z"
          fill="url(#deck)"
        />
        <path d="M312 900C330 1000 380 1110 500 1190C640 1275 880 1275 1030 1222C1180 1160 1310 1030 1360 910C1385 850 1392 790 1394 750" fill="none" stroke="#9d9792" strokeWidth="8" filter="url(#soft)" />
        <path d="M600 1232C700 1260 840 1262 960 1242" fill="none" stroke="#cfcac5" strokeWidth="5" filter="url(#soft)" />

        {/* dome */}
        <path
          d="M500 620C460 690 435 780 440 850C455 950 520 1040 620 1080C700 1110 850 1110 960 1080C1090 1040 1165 930 1175 800C1178 740 1160 670 1120 600z"
          fill="url(#dome)"
        />
        <path d="M440 850C455 950 520 1040 620 1080C700 1110 850 1110 960 1080" fill="none" stroke="#a7a19c" strokeWidth="5" filter="url(#soft)" />
        <path d="M600 1072C660 1100 740 1108 830 1104" fill="none" stroke="#e3e0dc" strokeWidth="3" filter="url(#soft)" />
        <path d="M490 620C460 670 450 700 452 735L515 738L505 620z" fill="#77706d" />
        <path d="M398 725C430 750 480 745 516 734C500 770 450 810 425 840z" fill="#5d5855" />
        <path d="M402 728C430 746 480 745 516 734" fill="none" stroke="#aca6a1" strokeWidth="6" filter="url(#soft)" />

        {/* rear right posts */}
        <path d="M1030 575L1104 430L1135 625L1160 690L1150 735H1090L1040 640z" fill="url(#barrel)" />
        <path d="M1060 660L1085 725C1110 745 1150 740 1152 715L1132 600L1050 560z" fill="url(#post)" />
        <path d="M1056 660C1105 672 1130 640 1110 575" fill="none" stroke="#a19b96" strokeWidth="9" filter="url(#soft)" />

        {/* barrel */}
        <path
          d="M487 490L498 600L520 660C530 760 560 820 600 860C670 910 800 925 890 895C950 875 985 840 1005 805L1000 680L760 790L560 720L520 520z"
          fill="url(#barrel)"
        />
        <path d="M990 690L1030 835C1045 862 1085 860 1090 835L1062 680z" fill="url(#post)" />
        <path d="M1104 430L1112 480L1128 590L1094 540L1074 488z" fill="#4a4643" />

        {/* inner floor and back wall */}
        <path
          d="M540 600C540 540 620 490 740 455L865 472C905 500 940 515 975 515L1030 570C1030 650 960 730 850 770C760 790 610 760 560 700z"
          fill="url(#floor)"
        />
        <path
          d="M555 655C535 620 530 575 550 530C590 465 660 400 716 330C725 380 745 415 774 436C770 455 745 460 700 475C620 505 570 570 555 655z"
          fill="url(#wall)"
        />
        <path d="M738 290C755 350 810 420 865 455L838 505L755 474L774 436C740 410 725 380 716 330z" fill="url(#saddle)" />
        <path d="M865 455V473L840 508L835 503z" fill="#413e38" />

        {/* bore */}
        <ellipse cx="789" cy="648" rx="133" ry="103" fill="url(#well)" />
        <path d="M665 715C680 640 730 600 795 600C860 600 910 620 921 655C915 710 890 750 840 770C780 785 690 770 665 715z" fill="#dfdb83" />
        <ellipse cx="797" cy="718" rx="58" ry="51" fill="url(#well)" />
        <path d="M750 748C775 705 830 700 855 722C850 750 830 768 795 768C775 768 758 760 750 748z" fill="#e4e5ea" />

        {/* machined yellow faces */}
        <path
          fillRule="evenodd"
          d="M700 274L738 290C720 340 690 375 640 420C590 465 545 520 537 570C532 640 560 700 620 745C690 785 780 785 850 768C940 740 1005 660 1012 575L1034 575C1035 620 1030 650 1000 692C950 735 900 795 790 802C740 803 710 800 685 796L600 765C555 730 520 680 512 600L513 530L545 470C570 430 620 400 665 332z"
          fill="#dfdb83"
        />
        <path d="M835 768C880 735 905 700 920 660C918 705 900 738 880 752z" fill="#8b8781" />
        <path d="M1067 414L1104 430L1074 488L1045 530L1010 575L1025 495z" fill="#dfdb83" />
        <path d="M985 493H1025L995 562L953 550z" fill="#d5d17c" />
        <path d="M570 440C590 460 630 430 665 380L620 400z" fill="#dfdb83" />
        <path d="M545 450C570 448 590 435 620 405L600 480L550 510z" fill="#dfdb83" />
        <Boss x={641} y={372} rx={49} ry={43} />
        <Boss x={525} y={478} rx={41} ry={37} hx={20} hy={17} />
        <Boss x={1046} y={525} rx={50} ry={46} />
        <Boss x={1021} y={667} rx={41} ry={35} hx={20} hy={17} />
        <path d="M553 655C540 600 545 555 580 505C620 455 660 425 690 390L640 425C590 465 537 520 536 580C537 610 543 635 553 655z" fill="#4a4744" />

        {/* front posts */}
        <path d="M583 890C580 870 590 865 600 872L712 850L730 900C730 970 720 1030 690 1062C670 1078 640 1072 622 1050C600 1010 590 950 583 890z" fill="url(#post)" />
        <path d="M588 900C600 955 690 955 715 890" fill="none" stroke="#9a948f" strokeWidth="22" filter="url(#soft)" />
        <path d="M594 840L598 900C610 940 680 940 704 895L692 830z" fill="url(#post)" />
        <path d="M610 938C630 948 650 948 668 940" fill="none" stroke="#d9d6d2" strokeWidth="4" filter="url(#soft)" />
        <Boss x={636} y={808} rx={51} ry={44} />
        <path d="M306 725L318 850C335 885 400 885 420 845L398 725z" fill="url(#post)" />
        <path d="M315 845C330 888 405 890 432 840" fill="none" stroke="#a39d98" strokeWidth="5" filter="url(#soft)" />
        <Boss x={350} y={712} />
        <path d="M934 890C945 880 975 915 985 940L980 990C960 960 940 920 934 890z" fill="#5d5855" />
        <path d="M940 892C955 905 970 930 982 945" fill="none" stroke="#aca6a1" strokeWidth="8" filter="url(#soft)" />
        <path d="M974 980L990 1095C1000 1135 1080 1130 1090 1085L1067 975z" fill="url(#post)" />
        <path d="M990 1098C1010 1140 1080 1135 1092 1085" fill="none" stroke="#a39d98" strokeWidth="5" filter="url(#soft)" />
        <Boss x={1020} y={967} />

        {/* front ear */}
        <path d="M522 1228L610 1262L612 1325C590 1350 580 1375 560 1384H525C505 1380 500 1370 500 1355L493 1290C500 1260 512 1245 522 1228z" fill="#5f5a57" />
        <path d="M522 1230L604 1264C590 1290 580 1330 530 1330C500 1328 490 1310 496 1280z" fill="#8a8480" />
        <path d="M498 1318C520 1335 560 1335 578 1310" fill="none" stroke="#bab5b0" strokeWidth="5" filter="url(#soft)" />
        <ellipse cx="538" cy="1287" rx="20" ry="17" fill="url(#bore)" />

        <g fill="#b7a3aa" fillOpacity=".05" stroke="#71494f" strokeWidth="2.2" strokeDasharray="9 1">
          {planes.map((p) => (
            <polygon key={p} points={p} />
          ))}
        </g>
        <path d="M785 643l4 22M798 718l6 34" stroke="#6b2f3a" strokeWidth="2.2" />

        {/* spin center */}
        <g strokeWidth="3.5" fill="none">
          <path d="M753 775L781 728" stroke="#4be04b" />
          <path d="M753 775L804 793" stroke="#d33a2c" />
          <path d="M753 775L747 735" stroke="#23dbe0" strokeWidth="7" strokeDasharray="12 20" />
        </g>
        <circle cx="781" cy="728" r="5" fill="#4be04b" />
        <circle cx="804" cy="794" r="6" fill="#e2392b" />
        <circle cx="747" cy="735" r="7" fill="#23dbe0" />

        {targets.map(([x, y]) => (
          <g key={x} transform={`translate(${x} ${y})`}>
            <path d="M-13-15L13 15M13-15L-13 15" stroke="#b0124a" strokeWidth="4.5" />
            <rect x="-6" y="-7" width="12" height="14" fill="#e88a4c" stroke="#b0124a" strokeWidth="4" />
          </g>
        ))}
      </g>
      <path d="M975.5 323.5v16l4-4 3 6.500 2.500-1.200-3-6h5z" fill="#fff" stroke="#222" />
    </Scene>
  );
}

export default function App() {
  return (
    <Shell>
      <Global />
      <TitleBar>
        <Quick>
          <Brand>
            <Icon name="logo" />
            creo<sup>•</sup>
          </Brand>
          <QuickButton type="button" aria-label="New"><Icon name="newFile" /></QuickButton>
          <QuickButton type="button" aria-label="Open"><Icon name="open" /></QuickButton>
          <QuickButton type="button" aria-label="Save"><Icon name="save" /></QuickButton>
          <QuickButton type="button" aria-label="Undo"><Icon name="undo" /></QuickButton>
          <QuickCaret type="button" aria-label="Undo list"><Caret color="#a9adae" /></QuickCaret>
          <QuickButton type="button" aria-label="Redo"><Icon name="redo" /></QuickButton>
          <QuickCaret type="button" aria-label="Redo list"><Caret color="#a9adae" /></QuickCaret>
          <QuickButton type="button" aria-label="Regenerate"><Icon name="regenSmall" /></QuickButton>
          <QuickButton type="button" aria-label="Windows"><Icon name="windows" /></QuickButton>
          <QuickCaret type="button" aria-label="Window list"><Caret /></QuickCaret>
          <QuickButton type="button" aria-label="Close"><Icon name="closeDoc" /></QuickButton>
          <QuickCaret type="button" aria-label="Customize" $line>
            <svg viewBox="0 0 10 8" width="10" height="8">
              <path d="M0 0h10v1H0zM0 3h10L5 8z" fill="#33383a" />
            </svg>
          </QuickCaret>
        </Quick>
        <Title>DATUMTARGETS (Active) - Creo Parametric</Title>
        <WindowButtons>
          <button type="button" aria-label="Minimize">
            <svg viewBox="0 0 14 14"><path d="M1 9h12" /></svg>
          </button>
          <button type="button" aria-label="Restore">
            <svg viewBox="0 0 14 14"><path d="M1 6h8v6H1zM5 5V2h8v6H9" /></svg>
          </button>
          <button type="button" aria-label="Close window">
            <svg viewBox="0 0 14 14"><path d="M2 2l10 10M12 2L2 12" strokeWidth="3" /></svg>
          </button>
        </WindowButtons>
      </TitleBar>

      <TabBar>
        {tabs.map((tab) => (
          <Tab key={tab} type="button" $file={tab === "File"} $active={tab === "Model"}>{tab}</Tab>
        ))}
        <TabTools>
          <button type="button" aria-label="Collapse ribbon"><Icon name="collapse" /></button>
          <button type="button" aria-label="Search"><Icon name="search" /></button>
          <button type="button" aria-label="Learning">
            <Icon name="learn" />
            <Caret color="#fff" />
          </button>
          <button type="button">?</button>
        </TabTools>
      </TabBar>

      <Ribbon />

      <Workspace>
        <Side>
          <SideTabs>
            <SideTab type="button" aria-label="Model tree" $active><Icon name="treeTab" /></SideTab>
            <SideTab type="button" aria-label="Folders"><Icon name="folders" /></SideTab>
            <SideTab type="button" aria-label="Favorites"><Icon name="favorites" /></SideTab>
          </SideTabs>

          <Tools>
            <Tool type="button" aria-label="Collapse tree" $w={30}><Disclosure viewBox="0 0 12 10"><path d="M0 0h12L6 10z" /></Disclosure></Tool>
            <Tool type="button" aria-label="Model" $w={16}><Icon name="greenCube" size={18} /></Tool>
            <Dots />
            <Tool type="button" aria-label="Expand all" $w={28}><Icon name="listRows" /></Tool>
            <Tool type="button" aria-label="Collapse all" $w={28}><Icon name="listShort" /></Tool>
            <Tool type="button" aria-label="Show columns" $w={30} $on><Icon name="columns" /></Tool>
            <Line />
            <Tool type="button" aria-label="New component" $w={32}><Icon name="newPart" /></Tool>
            <Line />
            <Tool type="button" aria-label="Tree filters" $w={32}><Icon name="treeFilter" /></Tool>
            <Tool type="button" aria-label="Tree columns" $w={28}><Icon name="treeColumns" /></Tool>
            <Tool type="button" aria-label="More" $w={26}>»</Tool>
            <Tool type="button" aria-label="Tree settings" $w={28}><Icon name="propsPage" /></Tool>
          </Tools>

          <Filter>
            <Icon name="funnel" />
            <FilterBox>
              <input type="text" aria-label="Filter tree" />
              <button type="button" aria-label="Clear filter">
                <svg viewBox="0 0 12 12" width="12" height="12">
                  <path d="M1 1l10 10M11 1L1 11" stroke="#9da0a2" strokeWidth="2" />
                </svg>
              </button>
            </FilterBox>
            <QuickCaret type="button" aria-label="Filter options"><Caret /></QuickCaret>
            <QuickButton type="button" aria-label="Add filter"><Icon name="plus" /></QuickButton>
          </Filter>

          <TreePane>
            <Tree>
              <RootRow>
                <Icon name="partBlue" />
                <RowText>DATUMTARGETS.PRT</RowText>
              </RootRow>
              {features.map((row, i) => (
                <TreeRow key={i} row={row} />
              ))}
            </Tree>
            <Scroll>
              <button type="button" aria-label="Scroll up">
                <svg viewBox="0 0 8 5"><path d="M0 5h8L4 0z" /></svg>
              </button>
              <Thumb />
              <button type="button" aria-label="Scroll down">
                <svg viewBox="0 0 8 5"><path d="M0 0h8L4 5z" /></svg>
              </button>
            </Scroll>
          </TreePane>

          <Tools $split>
            <Tool type="button" aria-label="Collapse layers" $w={26}><Disclosure viewBox="0 0 12 10"><path d="M0 0h12L6 10z" /></Disclosure></Tool>
            <Tool type="button" aria-label="Layers" $w={20}><Icon name="greenLayers" /></Tool>
            <Dots />
            <Tool type="button" aria-label="Expand layers" $w={28}><Icon name="listRows" /></Tool>
            <Tool type="button" aria-label="Collapse all layers" $w={28}><Icon name="listShort" /></Tool>
            <Line />
            <Toggles>
              <Tool type="button" aria-label="Show layers" $w={30} $on><Icon name="layersEye" /></Tool>
              <Tool type="button" aria-label="Layer solids" $w={30} $on><Icon name="layerCube" /></Tool>
              <Tool type="button" aria-label="Layer selection" $w={30} $on><Icon name="layerDash" /></Tool>
            </Toggles>
            <Tool type="button" aria-label="More layer tools" $w={38}>»</Tool>
            <Tool type="button" aria-label="Layer sets" $w={20}><Icon name="layerSet" /></Tool>
            <Tool type="button" aria-label="Layer settings" $w={28}><Icon name="propsPage" /></Tool>
          </Tools>

          <ModelPicker>
            <PickButton type="button" aria-label="Select model" disabled><Icon name="pointer" /></PickButton>
            <Select aria-label="Active model" disabled>
              <option>DATUMTARGETS.PRT</option>
            </Select>
            <SelectArrow><Caret color="#a5a8aa" /></SelectArrow>
          </ModelPicker>

          <LayerTree>
            <LayerRoot>
              <Icon name="layerSheets" />
              <RowText $layer>Layers</RowText>
            </LayerRoot>
            {layers.map((row) => (
              <TreeRow key={row.label} row={row} layer />
            ))}
          </LayerTree>
        </Side>

        <Canvas>
          <Model />
          <ViewBar>
            {viewTools.map((name) => (
              <ViewButton key={name} type="button" aria-label={name} $on={name === "annotation" || name === "spin"}>
                <Icon name={name} />
              </ViewButton>
            ))}
          </ViewBar>
          <Notes>
            <Standards>
              <p>ASME Y14.5-2009</p>
              <p>ASME Y14.41-2012</p>
              <p>ALL DIMENSIONS SPECIFIED IN MILLIMETERS</p>
            </Standards>
            <Tolerances>
              <p>X.X+-0.1</p>
              <p>X.XX+-0.01</p>
              <p>X.XXX+-0.001</p>
              <p>ANG.+-0.5</p>
            </Tolerances>
          </Notes>
        </Canvas>
      </Workspace>

      <Status>
        <Tool type="button" aria-label="Navigator" $w={26} $on><Icon name="panelEye" /></Tool>
        <Tool type="button" aria-label="Browser" $w={34}><Icon name="globe" /></Tool>
        <Tool type="button" aria-label="Full screen" $w={26}><Icon name="square" /></Tool>
        <Message>
          <i />
          Spin Center will be displayed.
        </Message>
        <Find>
          <FindButton type="button" aria-label="Find"><Icon name="binoculars" /></FindButton>
          <FindButton type="button" aria-label="Find options" $narrow><Caret /></FindButton>
        </Find>
        <Picker>
          <Select aria-label="Selection filter">
            <option>Geometry</option>
          </Select>
          <SelectArrow $dark><Caret /></SelectArrow>
        </Picker>
      </Status>
    </Shell>
  );
}

/* ---------- styles ---------- */

const Global = createGlobalStyle`
  * { box-sizing: border-box; }
  body { margin: 0; }
  body, button, input, select {
    font-family: "Open Sans", "Noto Sans", sans-serif;
    color: ${ink};
  }
  button { padding: 0; border: 0; background: none; }
  p, ul { margin: 0; padding: 0; }
`;

const Shell = styled.div`
  display: flex;
  flex-direction: column;
  height: 100vh;
  background: #f8fafb;
  font-size: 14px;
`;

const Glyph = styled.svg`
  flex: none;
  display: block;
  width: ${(p) => p.$size}px;
  height: ${(p) => p.$size}px;
  overflow: visible;
`;

const CaretSvg = styled.svg`
  flex: none;
  display: block;
  width: 8px;
  height: 5px;
`;

const TitleBar = styled.header`
  display: grid;
  grid-template-columns: 1fr auto 1fr;
  align-items: center;
  flex: 0 0 34px;
  background: #d8e0df;
`;

const Quick = styled.div`
  display: flex;
  align-items: center;
  gap: 10px;
  padding-left: 9px;
`;

const Brand = styled.div`
  display: flex;
  align-items: center;
  gap: 4px;
  width: 88px;
  font: 26px/30px Lato, sans-serif;
  color: #565a5c;

  sup {
    margin-left: -4px;
    font-size: 8px;
    line-height: 8px;
  }
`;

const QuickButton = styled.button`
  display: flex;
`;

const QuickCaret = styled.button`
  display: flex;
  justify-content: center;
  align-items: center;
  width: 10px;
  height: 30px;
  margin: 0 -2px;

  ${(p) => p.$line && css`
    width: 30px;
    border-left: 1px solid #9fa4a5;
  `}
`;

const Title = styled.div`
  font-size: 16px;
  color: #b0b6b6;
`;

const WindowButtons = styled.div`
  display: flex;
  justify-content: flex-end;
  gap: 19px;
  padding-right: 13px;

  button { display: flex; }
  svg {
    width: 14px;
    height: 14px;
    fill: none;
    stroke: #b3b9b9;
    stroke-width: 2px;
  }
`;

const TabBar = styled.nav`
  display: flex;
  flex: 0 0 35px;
  background: #3f4648;
`;

const Tab = styled.button`
  padding: 0 ${(p) => (p.$file ? 25 : 29)}px;
  font-size: 16px;
  color: ${(p) => (p.$active ? "#4a8a2e" : "#eef1f1")};
  background: ${(p) =>
    p.$file ? "linear-gradient(#62c83e, #4fa631)" : p.$active ? "#f7f9fc" : "none"};
`;

const TabTools = styled.div`
  display: flex;
  align-items: center;
  gap: 9px;
  margin-left: auto;
  padding-right: 10px;

  button {
    display: flex;
    align-items: center;
    gap: 9px;
    color: #fff;
    font-size: 17px;
    font-weight: 700;
  }
  button:last-child { margin-left: 7px; }
`;

const RibbonBar = styled.div`
  display: flex;
  flex: 0 0 136px;
  background: #f7f9fc;
  border-bottom: 1px solid #abb1b5;
`;

const Group = styled.section`
  display: flex;
  flex-direction: column;
  flex: 0 0 ${(p) => p.$width}px;
  margin: 3px 0;
  border-right: 1px solid #b2b6b9;
`;

const Parts = styled.div`
  display: flex;
  justify-content: ${(p) => (p.$center ? "center" : "flex-start")};
  gap: 10px;
  padding-left: ${(p) => (p.$center ? 0 : 8)}px;
  height: 100px;
`;

const Column = styled.div`
  display: flex;
  flex-direction: column;
  flex: none;
  width: ${(p) => (p.$width ? `${p.$width}px` : "auto")};
  margin-top: -3px;
`;

const Command = styled.button`
  display: flex;
  align-items: center;
  gap: 5px;
  height: 34px;
  font-size: 14px;
  white-space: nowrap;

  ${CaretSvg} { margin-left: 4px; }
  &:disabled { color: ${faded}; }
`;

const BigButton = styled.button`
  display: flex;
  flex-direction: column;
  align-items: center;
  flex: none;
  width: ${(p) => p.$width}px;
  padding-top: 4px;
  font-size: 14px;
`;

const BigLabel = styled.span`
  display: flex;
  flex-direction: column;
  align-items: center;
  margin: 12px 0 6px;
  line-height: 20px;
`;

const GroupLabel = styled.button`
  display: flex;
  justify-content: center;
  align-items: center;
  gap: 5px;
  flex: 1;
  padding-top: 6px;
  font-size: 14px;
  white-space: nowrap;
`;

const Workspace = styled.main`
  display: flex;
  flex: 1;
  min-height: 0;
`;

const Side = styled.aside`
  display: flex;
  flex-direction: column;
  flex: 0 0 354px;
  border-right: 3px solid #dde2e5;
  background: #f9fbfc;
`;

const SideTabs = styled.div`
  display: flex;
  flex: 0 0 32px;
  background: #d9dfde;
`;

const SideTab = styled.button`
  display: flex;
  justify-content: center;
  align-items: center;
  width: 39px;
  background: ${(p) => (p.$active ? "#f9fbfc" : "none")};
`;

const Tool = styled.button`
  display: flex;
  justify-content: center;
  align-items: center;
  flex: none;
  width: ${(p) => p.$w}px;
  height: 30px;
  font-size: 22px;
  line-height: 20px;

  ${(p) => p.$on && css`
    background: #dee1e3;
    border: 1px solid #b0b4b6;
  `}
`;

const Tools = styled.div`
  display: flex;
  align-items: center;
  flex: none;
  height: 40px;
  padding: 0 6px;

  ${(p) => p.$split && css`
    height: 43px;
    margin: 0 6px 0 10px;
    padding: 0;
    border-top: 3px solid #d5dadb;
  `}

  > ${Tool}:last-child { margin-left: auto; }
`;

const Toggles = styled.div`
  display: flex;
`;

const Disclosure = styled.svg`
  width: 12px;
  height: 10px;
  fill: #7d8183;
`;

const Dots = styled.span`
  flex: none;
  width: 4px;
  height: 22px;
  margin: 0 25px 0 8px;
  border-left: 3px dotted #b5b8ba;
`;

const Line = styled.span`
  flex: none;
  width: 1px;
  height: 30px;
  margin: 0 5px;
  background: #b2b6b9;
`;

const Filter = styled.div`
  display: flex;
  align-items: center;
  gap: 10px;
  flex: none;
  padding: 2px 12px 0 14px;
`;

const FilterBox = styled.div`
  display: flex;
  align-items: center;
  flex: 1;
  height: 34px;
  margin-left: -6px;
  padding-right: 6px;
  background: #fff;
  border: 1px solid #a9afb1;

  input {
    flex: 1;
    min-width: 0;
    border: 0;
    background: none;
    outline: none;
  }
  button { display: flex; }
`;

const TreePane = styled.div`
  display: flex;
  flex: 0 0 313px;
  margin-top: 6px;
  padding-right: 6px;
  overflow: hidden;
`;

const Tree = styled.ul`
  flex: 1;
  list-style: none;
`;

const LayerTree = styled(Tree)`
  padding-top: 1px;
`;

const Row = styled.li`
  display: flex;
  align-items: center;
  height: ${(p) => (p.$layer ? 26 : 22)}px;
  padding-left: 20px;
`;

const RootRow = styled(Row)`
  padding-left: 13px;
`;

const LayerRoot = styled(Row)`
  height: 26px;
  padding-left: 13px;
`;

const Twisty = styled.button`
  display: flex;
  width: 18px;
`;

const RowText = styled.span`
  margin-left: ${(p) => (p.$layer ? 11 : 6)}px;
  font-size: ${(p) => (p.$layer ? 14 : 12)}px;
  color: ${(p) => (p.$dim ? "#bdb8a4" : ink)};
  white-space: nowrap;
`;

const Scroll = styled.div`
  display: flex;
  flex-direction: column;
  width: 18px;
  background: #e1e3e4;

  button {
    display: flex;
    justify-content: center;
    align-items: center;
    height: 18px;
    background: #f9fbfc;
    border: 1px solid #c9cccd;
  }
  button:last-child { margin-top: auto; }
  svg {
    width: 8px;
    height: 5px;
    fill: #a0a3a5;
  }
`;

const Thumb = styled.div`
  height: 70px;
  background: #f9fbfc;
  border: 1px solid #c4c7c8;
`;

const Picker = styled.div`
  display: flex;
  width: 216px;
  height: 28px;
  margin-right: 22px;
  border: 1px solid #a9adaf;
`;

const ModelPicker = styled(Picker)`
  flex: none;
  width: auto;
  height: 30px;
  margin: 0 6px 0 10px;
  border-color: #c9cccd;
`;

const PickButton = styled.button`
  display: flex;
  justify-content: center;
  align-items: center;
  width: 30px;
  background: #eceeef;
  border-right: 1px solid #c9cccd;
`;

const Select = styled.select`
  appearance: none;
  flex: 1;
  padding: 0 8px;
  border: 0;
  background: none;
  font-size: 14px;
  &:disabled { color: ${faded}; opacity: 1; }
`;

const SelectArrow = styled.span`
  display: flex;
  justify-content: center;
  align-items: center;
  width: 19px;
  border-left: 1px solid ${(p) => (p.$dark ? "#a9adaf" : "#c9cccd")};
  pointer-events: none;
`;

const Canvas = styled.section`
  position: relative;
  display: flex;
  flex-direction: column;
  align-items: center;
  flex: 1;
  min-width: 0;
  background: #e8eaee;
`;

const Scene = styled.svg`
  position: absolute;
  inset: 0;
  width: 100%;
  height: 100%;
`;

const ViewBar = styled.div`
  position: relative;
  display: flex;
  gap: 4px;
  margin-top: 7px;
  padding: 4px;
  background: #f9fbfc;
  border: 1px solid #a3a7ab;
`;

const ViewButton = styled.button`
  display: flex;
  justify-content: center;
  align-items: center;
  width: 28px;
  height: 28px;

  ${(p) => p.$on && css`
    background: #dee1e3;
    border: 1px solid #b0b4b6;
  `}
`;

const Notes = styled.div`
  position: relative;
  display: flex;
  justify-content: space-between;
  align-items: flex-end;
  align-self: stretch;
  margin-top: auto;
  padding: 0 62px 0 39px;
  font-family: "Liberation Sans", Arial, sans-serif;
`;

const Standards = styled.div`
  display: flex;
  flex-direction: column;
  gap: 7px;
  font-size: 15px;
  line-height: 18px;
  color: #42206f;
`;

const Tolerances = styled.div`
  padding-bottom: 6px;
  font-size: 14px;
  line-height: 15px;
  text-align: center;
  color: #8f9098;
`;

const Status = styled.footer`
  display: flex;
  align-items: center;
  flex: 0 0 42px;
  padding-left: 7px;
  border-top: 1px solid #b0b6ba;
  background: #f9fbfb;
`;

const Message = styled.div`
  display: flex;
  align-items: center;
  gap: 6px;
  height: 30px;
  margin: 0 auto 0 10px;
  padding: 0 0 2px 8px;
  border-left: 1px solid #b2b6b9;
  font-size: 12px;

  i {
    width: 6px;
    height: 6px;
    margin-bottom: 4px;
    border-radius: 50%;
    background: ${teal};
  }
`;

const Find = styled.div`
  display: flex;
  align-items: center;
  height: 32px;
  margin-right: 119px;
  padding: 0 2px;
  border-right: 1px solid #b2b6b9;
  border-left: 6px double #b2b6b9;
`;

const FindButton = styled.button`
  display: flex;
  justify-content: center;
  align-items: center;
  width: ${(p) => (p.$narrow ? 18 : 34)}px;
  height: 30px;
  border: 1px solid #c4c7c8;
  & + & { border-left: 0; }
`;
